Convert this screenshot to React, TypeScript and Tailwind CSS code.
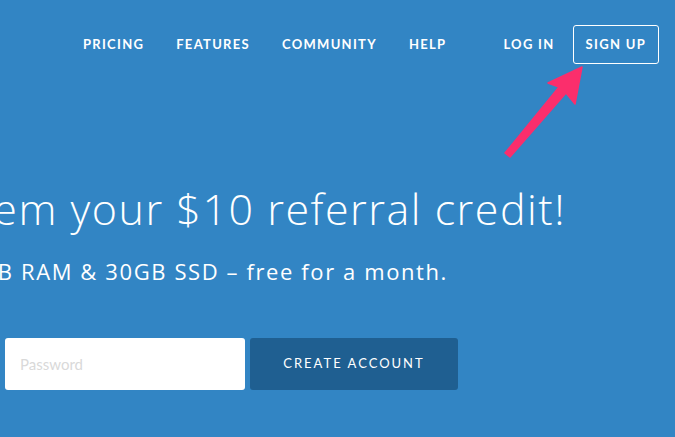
import React from 'react';

const navLinks = ['PRICING', 'FEATURES', 'COMMUNITY', 'HELP'];

const Arrow = () => (
  <svg
    className="pointer-events-none absolute left-0 top-0"
    width="675"
    height="437"
    viewBox="0 0 675 437"
  >
    <path
      d="M582 67 L575 104 L566 93 L510 157 L505 153 L559 87 L548 83 Z"
      fill="#fb2e6c"
      stroke="#fb2e6c"
      strokeWidth="1.5"
      strokeLinejoin="round"
    />
  </svg>
);

export default function App() {
  return (
    <div
      className="relative h-[437px] w-full overflow-hidden bg-[#3285c4] text-white"
      style={{ fontFamily: 'Lato, "Open Sans", sans-serif' }}
    >
      <header className="flex items-center justify-end pr-[16px] pt-[25px]">
        <nav className="flex items-center gap-[32px]">
          {navLinks.map((link) => (
            <a key={link} className="text-[13px] font-bold tracking-[1.3px] text-white">
              {link}
            </a>
          ))}
        </nav>
        <a className="ml-[57px] text-[13px] font-bold tracking-[1.3px]">LOG IN</a>
        <a className="ml-[18px] flex h-[39px] items-center rounded-[3px] border border-white px-[12px] text-[13px] font-bold tracking-[1.3px]">
          SIGN UP
        </a>
      </header>

      <section className="flex flex-col items-end font-['Open_Sans',sans-serif]">
        <h1 className="mt-[116px] whitespace-nowrap pr-[109px] text-[43px] font-light leading-[58px] tracking-[1.5px]">
          Redeem your $10 referral credit!
        </h1>
        <p className="mt-[19px] whitespace-nowrap pr-[227px] text-[22px] leading-[28px] tracking-[1.6px]">
          Get a server with 1GB RAM &amp; 30GB SSD – free for a month.
        </p>
        <form className="mt-[53px] flex gap-[5px] pr-[217px]">
          <input
            type="password"
            placeholder="Password"
            className="h-[52px] w-[240px] rounded-[3px] bg-white px-[15px] font-['Lato',sans-serif] text-[15px] text-gray-700 outline-none placeholder:text-[#d9d9d9]"
          />
          <button
            type="button"
            className="h-[52px] w-[208px] rounded-[3px] bg-[#1f5f91] font-['Lato',sans-serif] text-[13px] tracking-[2px] text-white"
          >
            CREATE ACCOUNT
          </button>
        </form>
      </section>

      <Arrow />
    </div>
  );
}
